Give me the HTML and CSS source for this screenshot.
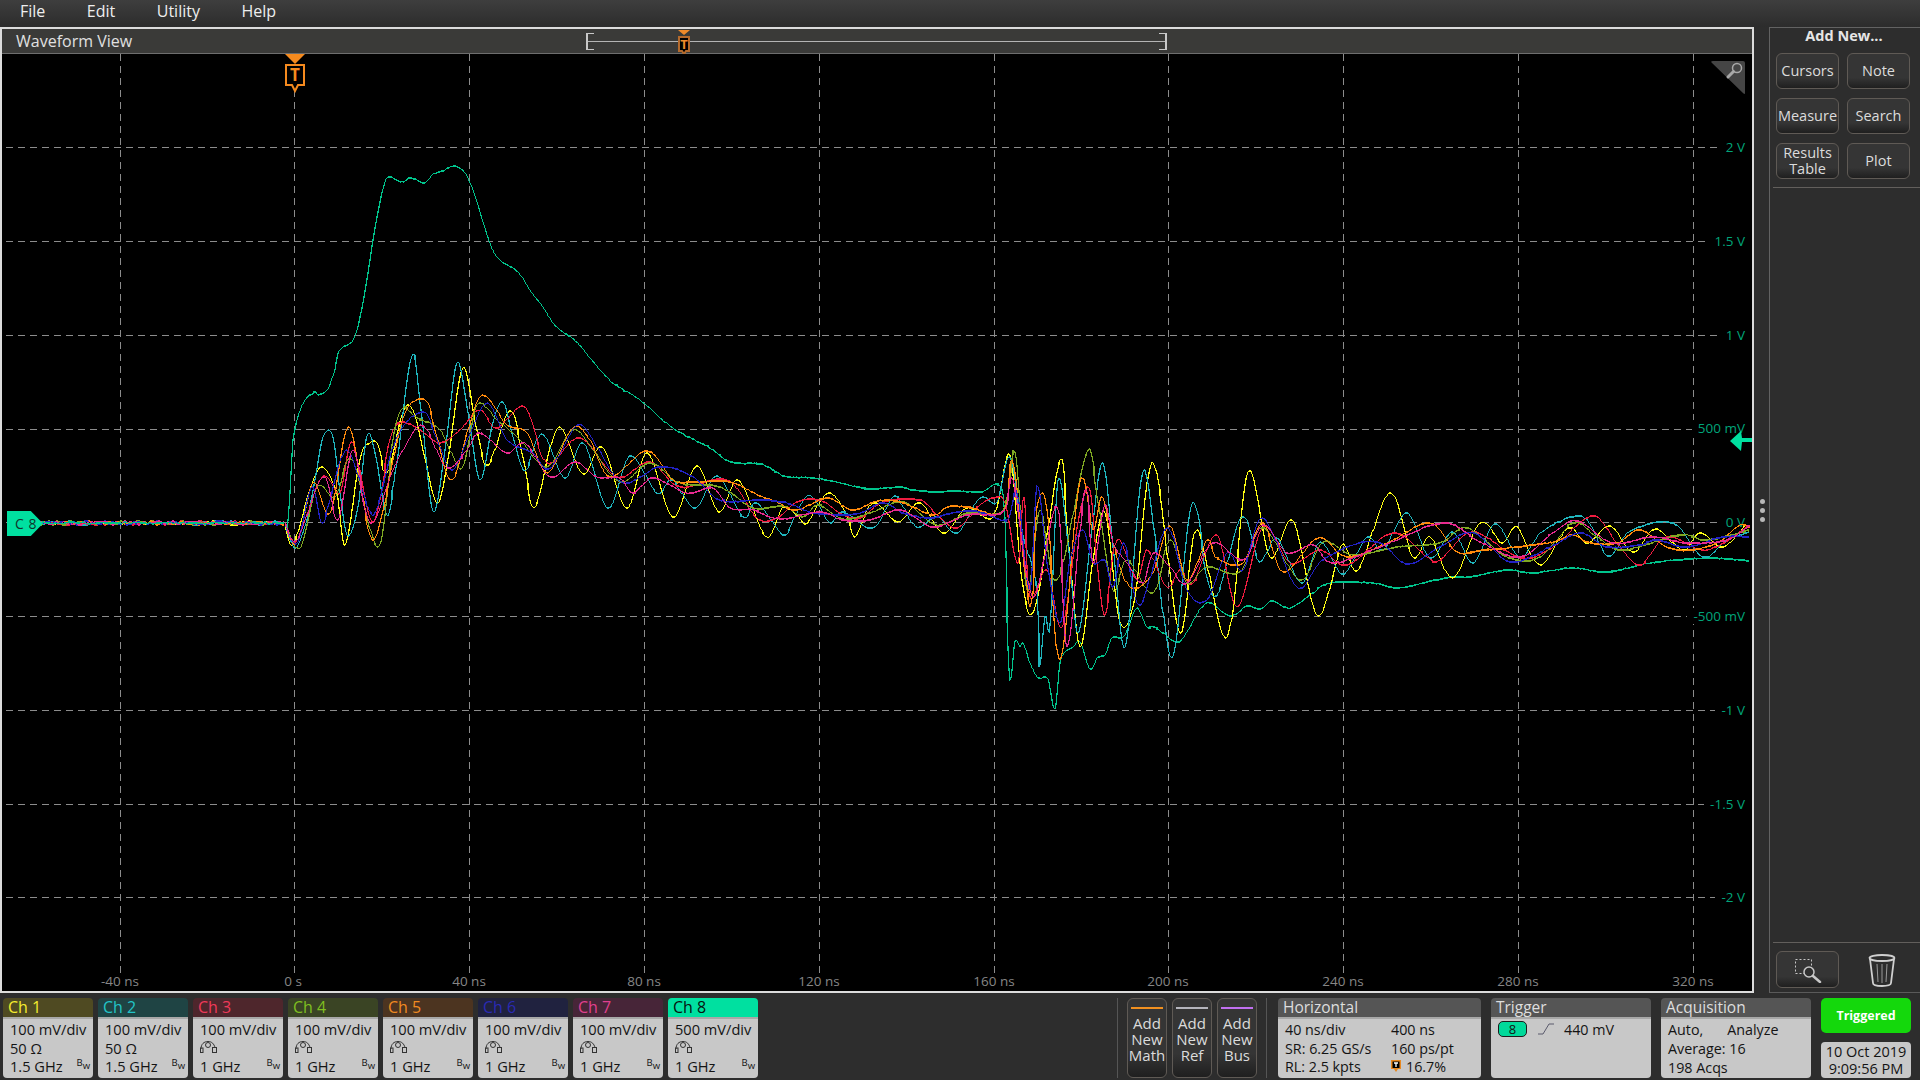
FILE: index.html
```html
<!DOCTYPE html>
<html>
<head>
  <meta charset="utf-8">
  <title>Waveform View</title>
  <link rel="stylesheet" href="styles.css">
</head>
<body>

<div class="menubar">
  <span class="menu-item">File</span>
  <span class="menu-item">Edit</span>
  <span class="menu-item">Utility</span>
  <span class="menu-item">Help</span>
</div>

<div class="main">
  <div class="view">
    <div class="view-title">
      <div class="view-name">Waveform View</div>
      <div class="overview">
        <svg class="overview-mark" width="24" height="24" viewBox="0 0 24 24">
          <polygon class="mark-dim" points="6,0 18,0 12,5"/>
          <path class="mark-box" d="M7 7h10v14h-3l-2 3-2-3h-3z"/>
          <text class="mark-t" x="12" y="18.500">T</text>
        </svg>
      </div>
    </div>
    <div class="plot">
      <svg class="grid" viewBox="2 54 1750 937">
        <g class="grid-v">
          <line x1="120.500" y1="54" x2="120.500" y2="973"/>
          <line x1="294.500" y1="54" x2="294.500" y2="973"/>
          <line x1="469.500" y1="54" x2="469.500" y2="973"/>
          <line x1="644.500" y1="54" x2="644.500" y2="973"/>
          <line x1="819.500" y1="54" x2="819.500" y2="973"/>
          <line x1="994.500" y1="54" x2="994.500" y2="973"/>
          <line x1="1168.500" y1="54" x2="1168.500" y2="973"/>
          <line x1="1343.500" y1="54" x2="1343.500" y2="973"/>
          <line x1="1518.500" y1="54" x2="1518.500" y2="973"/>
          <line x1="1693.500" y1="54" x2="1693.500" y2="973"/>
        </g>
        <g class="grid-h">
          <line x1="6" y1="147.500" x2="1742" y2="147.500"/>
          <line x1="6" y1="241.500" x2="1742" y2="241.500"/>
          <line x1="6" y1="335.500" x2="1742" y2="335.500"/>
          <line x1="6" y1="429.500" x2="1742" y2="429.500"/>
          <line x1="6" y1="522.500" x2="1742" y2="522.500"/>
          <line x1="6" y1="616.500" x2="1742" y2="616.500"/>
          <line x1="6" y1="710.500" x2="1742" y2="710.500"/>
          <line x1="6" y1="804.500" x2="1742" y2="804.500"/>
          <line x1="6" y1="897.500" x2="1742" y2="897.500"/>
        </g>
      </svg>

      <span class="volt" style="top:93px">2 V</span>
      <span class="volt" style="top:187px">1.5 V</span>
      <span class="volt" style="top:281px">1 V</span>
      <span class="volt" style="top:374px">500 mV</span>
      <span class="volt" style="top:468px">0 V</span>
      <span class="volt" style="top:562px">-500 mV</span>
      <span class="volt" style="top:656px">-1 V</span>
      <span class="volt" style="top:750px">-1.5 V</span>
      <span class="volt" style="top:843px">-2 V</span>

      <span class="time" style="left:118px">-40 ns</span>
      <span class="time" style="left:291px">0 s</span>
      <span class="time" style="left:467px">40 ns</span>
      <span class="time" style="left:642px">80 ns</span>
      <span class="time" style="left:817px">120 ns</span>
      <span class="time" style="left:992px">160 ns</span>
      <span class="time" style="left:1166px">200 ns</span>
      <span class="time" style="left:1341px">240 ns</span>
      <span class="time" style="left:1516px">280 ns</span>
      <span class="time" style="left:1691px">320 ns</span>

      <svg id="waves" class="waves" viewBox="2 54 1750 937"></svg>

      <svg class="trig-mark" width="24" height="40" viewBox="0 0 24 40">
        <polygon class="mark-solid" points="2,0 22,0 12,10"/>
        <path class="mark-bright" d="M3 11h18v20h-6l-3 6-3-6h-6z"/>
        <text class="mark-big-t" x="12" y="27">T</text>
      </svg>

      <svg class="zoom-corner" width="36" height="36" viewBox="0 0 36 36">
        <path class="corner-bg" d="M3 1h30q2 0 2 2v30q0 2-2 0L2 3q-2-2 1-2z"/>
        <circle class="corner-glass" cx="27" cy="8" r="4.500"/>
        <line class="corner-handle" x1="23.500" y1="11.500" x2="18" y2="17"/>
      </svg>

      <div class="c8-tag">C 8</div>
      <svg class="level-arrow" width="22" height="20" viewBox="0 0 22 20">
        <polygon class="arrow-fill" points="0,10 11,0 12,7 22,7 22,11 12,11 11,20"/>
      </svg>
    </div>
  </div>

  <div class="gutter">
    <span class="dot"></span>
    <span class="dot"></span>
    <span class="dot"></span>
  </div>

  <div class="panel">
    <div class="panel-title">Add New...</div>
    <div class="panel-buttons">
      <div class="btn">Cursors</div>
      <div class="btn">Note</div>
      <div class="btn">Measure</div>
      <div class="btn">Search</div>
      <div class="btn">Results<br>Table</div>
      <div class="btn">Plot</div>
    </div>
    <div class="panel-rule"></div>
    <div class="panel-space"></div>
    <div class="panel-rule"></div>
    <div class="panel-tools">
      <div class="btn tool-btn">
        <svg width="28" height="26" viewBox="0 0 28 26">
          <rect class="zoom-dots" x="1.500" y="2.500" width="16" height="14"/>
          <circle class="zoom-lens" cx="15" cy="15" r="5"/>
          <line class="zoom-grip" x1="19" y1="19" x2="26" y2="25"/>
        </svg>
      </div>
      <svg class="trash" width="30" height="34" viewBox="0 0 30 34">
        <ellipse class="trash-line" cx="15" cy="5" rx="12.500" ry="3"/>
        <path class="trash-line" d="M3 6l3 24q0 3 9 3t9-3l3-24"/>
        <path class="trash-thin" d="M10 11l1 18M15 11v19M20 11l-1 18"/>
      </svg>
    </div>
  </div>
</div>

<div class="bottombar">
  <div class="channels">
    <div class="badge">
      <div class="badge-head head-1">Ch 1</div>
      <div class="badge-body"><div>100 mV/div</div><div>50 Ω</div><div class="badge-last"><span>1.5 GHz</span><span class="bw">B<sub>w</sub></span></div></div>
    </div>
    <div class="badge">
      <div class="badge-head head-2">Ch 2</div>
      <div class="badge-body"><div>100 mV/div</div><div>50 Ω</div><div class="badge-last"><span>1.5 GHz</span><span class="bw">B<sub>w</sub></span></div></div>
    </div>
    <div class="badge">
      <div class="badge-head head-3">Ch 3</div>
      <div class="badge-body"><div>100 mV/div</div><div class="probe-row"><svg class="probe" viewBox="0 0 17 12"><use href="#probe-icon"/></svg></div><div class="badge-last"><span>1 GHz</span><span class="bw">B<sub>w</sub></span></div></div>
    </div>
    <div class="badge">
      <div class="badge-head head-4">Ch 4</div>
      <div class="badge-body"><div>100 mV/div</div><div class="probe-row"><svg class="probe" viewBox="0 0 17 12"><use href="#probe-icon"/></svg></div><div class="badge-last"><span>1 GHz</span><span class="bw">B<sub>w</sub></span></div></div>
    </div>
    <div class="badge">
      <div class="badge-head head-5">Ch 5</div>
      <div class="badge-body"><div>100 mV/div</div><div class="probe-row"><svg class="probe" viewBox="0 0 17 12"><use href="#probe-icon"/></svg></div><div class="badge-last"><span>1 GHz</span><span class="bw">B<sub>w</sub></span></div></div>
    </div>
    <div class="badge">
      <div class="badge-head head-6">Ch 6</div>
      <div class="badge-body"><div>100 mV/div</div><div class="probe-row"><svg class="probe" viewBox="0 0 17 12"><use href="#probe-icon"/></svg></div><div class="badge-last"><span>1 GHz</span><span class="bw">B<sub>w</sub></span></div></div>
    </div>
    <div class="badge">
      <div class="badge-head head-7">Ch 7</div>
      <div class="badge-body"><div>100 mV/div</div><div class="probe-row"><svg class="probe" viewBox="0 0 17 12"><use href="#probe-icon"/></svg></div><div class="badge-last"><span>1 GHz</span><span class="bw">B<sub>w</sub></span></div></div>
    </div>
    <div class="badge">
      <div class="badge-head head-8">Ch 8</div>
      <div class="badge-body"><div>500 mV/div</div><div class="probe-row"><svg class="probe" viewBox="0 0 17 12"><use href="#probe-icon"/></svg></div><div class="badge-last"><span>1 GHz</span><span class="bw">B<sub>w</sub></span></div></div>
    </div>
  </div>

  <div class="add-group">
    <div class="add-btn"><span class="add-line line-math"></span>Add<br>New<br>Math</div>
    <div class="add-btn"><span class="add-line line-ref"></span>Add<br>New<br>Ref</div>
    <div class="add-btn"><span class="add-line line-bus"></span>Add<br>New<br>Bus</div>
  </div>

  <div class="info info-horizontal">
    <div class="info-head">Horizontal</div>
    <div class="info-body horizontal-grid">
      <div>40 ns/div</div><div>400 ns</div>
      <div>SR: 6.25 GS/s</div><div>160 ps/pt</div>
      <div>RL: 2.5 kpts</div>
      <div class="pos-row">
        <svg width="10" height="12" viewBox="0 0 10 12">
          <path class="pos-icon" d="M0 0h10v9h-3l-2 3-2-3h-3z"/>
          <rect class="pos-inner" x="1.500" y="1.500" width="7" height="6.500"/>
          <path class="pos-t" d="M3 3h4M5 3v4"/>
        </svg>
        <span>16.7%</span>
      </div>
    </div>
  </div>

  <div class="info info-trigger">
    <div class="info-head">Trigger</div>
    <div class="info-body trigger-row">
      <span class="trig-pill">8</span>
      <svg class="slope" width="16" height="12" viewBox="0 0 16 12">
        <path class="slope-line" d="M0 11h5L11 1h5"/>
      </svg>
      <span>440 mV</span>
    </div>
  </div>

  <div class="info info-acq">
    <div class="info-head">Acquisition</div>
    <div class="info-body">
      <div class="acq-top"><span>Auto,</span><span>Analyze</span></div>
      <div>Average: 16</div>
      <div>198 Acqs</div>
    </div>
  </div>

  <div class="status">
    <div class="triggered">Triggered</div>
    <div class="clock">10 Oct 2019<br>9:09:56 PM</div>
  </div>
</div>

<svg class="defs" width="0" height="0">
  <symbol id="probe-icon" viewBox="0 0 17 12" width="17" height="12">
    <path class="probe-line" d="M1 8C1 3 4 .5 8 .5s6 2.500 7 6"/>
    <circle class="probe-line" cx="8" cy="4" r="2.500"/>
    <rect class="probe-line" x="0.500" y="7" width="2.500" height="4.500"/>
    <rect class="probe-line" x="12.500" y="6.500" width="4" height="5"/>
  </symbol>
</svg>

<script src="script.js"></script>
</body>
</html>
```

FILE: styles.css
```css
* {
  box-sizing: border-box;
}

html, body {
  margin: 0;
  padding: 0;
}

body {
  width: 1920px;
  height: 1080px;
  overflow: hidden;
  display: flex;
  flex-direction: column;
  background-color: #2d2d2d;
  color: #e4e4e4;
  font-family: "Open Sans", "Noto Sans", sans-serif;
  font-size: 15px;
}

/* menu */
.menubar {
  height: 27px;
  flex: none;
  display: flex;
  align-items: center;
  gap: 41.500px;
  padding: 0 0 5px 20px;
  background: linear-gradient(#3e3e3e, #2c2c2c);
  font-size: 16px;
  color: #eeeeee;
}

/* main row */
.main {
  height: 966px;
  flex: none;
  display: flex;
}

.view {
  width: 1754px;
  flex: none;
  display: flex;
  flex-direction: column;
  border: 2px solid #dcdcdc;
}

.view-title {
  height: 25px;
  flex: none;
  display: flex;
  align-items: center;
  background-color: #3a3a38;
  border-bottom: 1px solid #6e6e6e;
}

.view-name {
  width: 584px;
  padding-left: 14px;
  font-size: 16px;
  color: #e0e0e0;
}

.overview {
  position: relative;
  width: 581px;
  height: 17px;
  border-left: 2px solid #c8c8c8;
  border-right: 2px solid #c8c8c8;
  background: linear-gradient(#b4b4b4, #b4b4b4) left 8px / 100% 1px no-repeat,
    linear-gradient(#c8c8c8, #c8c8c8) left top / 6px 1px no-repeat,
    linear-gradient(#c8c8c8, #c8c8c8) left bottom / 6px 1px no-repeat,
    linear-gradient(#c8c8c8, #c8c8c8) right top / 6px 1px no-repeat,
    linear-gradient(#c8c8c8, #c8c8c8) right bottom / 6px 1px no-repeat;
}

.overview-mark {
  position: absolute;
  left: 84px;
  top: -3px;
}

.mark-dim { fill: #ef8a2a; }
.mark-box { fill: #000000; stroke: #b56a2c; stroke-width: 2; }
.mark-t {
  fill: #ef8a2a;
  font-size: 13px;
  font-weight: 700;
  text-anchor: middle;
}

.plot {
  position: relative;
  flex: 1;
  background-color: #000000;
  overflow: hidden;
}

.grid, .waves {
  position: absolute;
  left: 0;
  top: 0;
  width: 1750px;
  height: 937px;
}

.grid-v line, .grid-h line {
  stroke: #8c8c8c;
  stroke-width: 1;
  stroke-dasharray: 7 5;
  shape-rendering: crispEdges;
}

.wave {
  fill: none;
  stroke-width: 1.200;
  stroke-linejoin: miter;
  shape-rendering: crispEdges;
}

.wave-1 { stroke: #ffff14; }
.wave-2 { stroke: #1fb5bd; }
.wave-3 { stroke: #f01c40; }
.wave-4 { stroke: #7fa822; }
.wave-5 { stroke: #ff8a0c; }
.wave-6 { stroke: #2222c4; }
.wave-7 { stroke: #e82a90; }
.wave-8 { stroke: #00c48c; }

.volt {
  position: absolute;
  right: 7px;
  padding-left: 6px;
  background-color: #000000;
  color: #00a57a;
  font-size: 13.500px;
  line-height: 16px;
  margin-top: -8px;
}

.time {
  position: absolute;
  top: 918px;
  padding: 0 3px;
  color: #868686;
  font-size: 13.500px;
  line-height: 18px;
  transform: translateX(-50%);
}

.trig-mark {
  position: absolute;
  left: 281px;
  top: 0;
}

.mark-solid { fill: #f58a1e; }
.mark-bright { fill: #000000; stroke: #f58a1e; stroke-width: 2; }
.mark-big-t {
  fill: #f58a1e;
  font-size: 17px;
  font-weight: 700;
  text-anchor: middle;
}

.zoom-corner {
  position: absolute;
  left: 1708px;
  top: 6px;
}

.corner-bg { fill: #454545; }
.corner-glass { fill: none; stroke: #a8a8a8; stroke-width: 1.500; }
.corner-handle { stroke: #a8a8a8; stroke-width: 3; stroke-linecap: round; }

.c8-tag {
  position: absolute;
  left: 5px;
  top: 457px;
  width: 36px;
  height: 25px;
  padding-left: 8px;
  background-color: #00e0a0;
  clip-path: polygon(0 0, 66% 0, 100% 50%, 66% 100%, 0 100%);
  color: #10332a;
  font-size: 14px;
  line-height: 25px;
  letter-spacing: 0.500px;
  white-space: nowrap;
}

.level-arrow {
  position: absolute;
  left: 1728px;
  top: 377px;
}

.arrow-fill { fill: #00e0a0; }

/* gutter */
.gutter {
  width: 15px;
  flex: none;
  display: flex;
  flex-direction: column;
  align-items: center;
  gap: 4px;
  padding-top: 472px;
  padding-left: 2px;
}

.dot {
  width: 5px;
  height: 5px;
  border-radius: 50%;
  background-color: #b8b8b8;
}

/* right panel */
.panel {
  width: 151px;
  flex: none;
  display: flex;
  flex-direction: column;
  border-left: 1px solid #626262;
  border-top: 1px solid #626262;
  border-bottom: 1px solid #5a5a5a;
}

.panel-title {
  height: 25px;
  text-align: center;
  padding-right: 2px;
  font-size: 14.500px;
  font-weight: 700;
  line-height: 15px;
  color: #e6e6e6;
}

.panel-buttons {
  display: grid;
  grid-template-columns: 63px 63px;
  grid-auto-rows: 36px;
  gap: 9px 8px;
  padding-left: 6px;
}

.btn {
  display: flex;
  align-items: center;
  justify-content: center;
  text-align: center;
  border: 1px solid #5f5a55;
  border-radius: 6px;
  background: linear-gradient(#353535 70%, #1f1f1f);
  color: #dcdcdc;
  font-size: 14.500px;
  line-height: 16px;
}

.panel-rule {
  height: 1px;
  margin-left: 3px;
  flex: none;
  background-color: #625f5c;
}

.panel-buttons + .panel-rule {
  margin-top: 8px;
}

.panel-space {
  flex: 1;
}

.panel-tools {
  height: 49px;
  flex: none;
  display: flex;
  align-items: flex-start;
  padding: 8px 0 0 6px;
}

.tool-btn {
  width: 63px;
  height: 37px;
}

.zoom-dots { fill: none; stroke: #c8c8c8; stroke-dasharray: 2 2; }
.zoom-lens { fill: #2f2f2f; stroke: #c8c8c8; stroke-width: 1.500; }
.zoom-grip { stroke: #c8c8c8; stroke-width: 2.500; stroke-linecap: round; }

.trash {
  margin-left: 28px;
  margin-top: 2px;
}

.trash-line { fill: none; stroke: #d0d0d0; stroke-width: 1.800; }
.trash-thin { fill: none; stroke: #9a9a9a; stroke-width: 1; }

/* bottom bar */
.bottombar {
  flex: 1;
  display: flex;
  padding: 5px 0 2px 3px;
}

.channels {
  display: flex;
  gap: 5px;
}

.badge {
  width: 90px;
  display: flex;
  flex-direction: column;
}

.badge-head {
  height: 19px;
  padding-left: 5px;
  font-size: 16px;
  line-height: 18px;
  flex: none;
  border-radius: 4px 4px 0 0;
}

.head-1 { background-color: #4f4a22; color: #f4ec2e; }
.head-2 { background-color: #1f4444; color: #22c4c8; }
.head-3 { background-color: #4e262c; color: #ee3a5a; }
.head-4 { background-color: #3a4424; color: #7fbf20; }
.head-5 { background-color: #4c3420; color: #f08a20; }
.head-6 { background-color: #20223f; color: #2a2ab4; }
.head-7 { background-color: #472538; color: #e0408f; }
.head-8 { background-color: #00e0a0; color: #06140f; }

.badge-body {
  flex: 1;
  padding: 1px 3px 0 7px;
  border-top: 2px solid #a8a8a8;
  border-radius: 0 0 4px 4px;
  background-color: #c8c8c8;
  color: #141414;
  font-size: 14.600px;
  line-height: 19px;
}

.badge-last {
  display: flex;
  justify-content: space-between;
  margin-top: -1px;
}

.probe-row {
  height: 19px;
  padding-top: 2px;
}

.probe {
  width: 17px;
  height: 12px;
  display: block;
}

.probe-line {
  fill: none;
  stroke: #333333;
  stroke-width: 1;
}

.bw {
  font-size: 9.500px;
  line-height: 12px;
}

.bw sub {
  font-size: 9.500px;
  vertical-align: -3px;
  line-height: 0;
}

.add-group {
  display: flex;
  gap: 5px;
  height: 80px;
  margin-left: 359px;
  padding: 0 9px;
  width: 150px;
  border-left: 1px solid #555555;
  border-right: 1px solid #555555;
}

.add-btn {
  width: 40px;
  flex: none;
  padding-top: 8px;
  text-align: center;
  border: 1px solid #5f5a55;
  border-radius: 6px;
  background: linear-gradient(#353535 70%, #1f1f1f);
  color: #dcdcdc;
  font-size: 15px;
  line-height: 16px;
  white-space: nowrap;
}

.add-line {
  display: block;
  height: 2px;
  margin: 0 3px 6px;
}

.line-math { background-color: #f09020; }
.line-ref { background-color: #b4b4bc; }
.line-bus { background-color: #c070f0; }

.info {
  height: 80px;
  display: flex;
  flex-direction: column;
}

.info-horizontal { width: 203px; margin-left: 11px; }
.info-trigger { width: 160px; margin-left: 10px; }
.info-acq { width: 150px; margin-left: 10px; }

.info-head {
  height: 19px;
  flex: none;
  padding-left: 5px;
  border-radius: 4px 4px 0 0;
  background-color: #555555;
  color: #dedede;
  font-size: 15.500px;
  line-height: 18px;
}

.info-body {
  flex: 1;
  padding: 1px 4px 0 7px;
  border-top: 2px solid #a8a8a8;
  border-radius: 0 0 4px 4px;
  background-color: #c8c8c8;
  color: #141414;
  font-size: 14.300px;
  line-height: 19px;
}

.horizontal-grid {
  display: grid;
  grid-template-columns: 106px 1fr;
  grid-auto-rows: 18.500px;
}

.pos-row {
  display: flex;
  align-items: center;
  gap: 5px;
}

.pos-icon { fill: #e8881e; }
.pos-inner { fill: #000000; }
.pos-t { fill: none; stroke: #ffffff; stroke-width: 1.300; }

.trigger-row {
  display: flex;
  align-items: flex-start;
}

.trig-pill {
  width: 29px;
  height: 16px;
  margin-top: 1px;
  text-align: center;
  border: 1px solid #1c1c1c;
  border-radius: 5px;
  background-color: #00d99a;
  font-size: 13px;
  line-height: 14px;
}

.slope {
  margin: 3px 10px 0 11px;
}

.slope-line {
  fill: none;
  stroke: #5a5a6c;
  stroke-width: 1;
}

.acq-top {
  display: flex;
  gap: 24px;
}

.status {
  width: 90px;
  margin-left: 10px;
  display: flex;
  flex-direction: column;
}

.triggered {
  height: 35px;
  display: flex;
  align-items: center;
  justify-content: center;
  border-radius: 5px;
  background-color: #14d80c;
  color: #ffffff;
  font-size: 12.500px;
  font-weight: 700;
}

.clock {
  height: 36px;
  margin-top: 9px;
  border-radius: 4px;
  text-align: center;
  background-color: #c8c8c8;
  color: #141414;
  font-size: 14.500px;
  line-height: 17px;
  padding-top: 1px;
  white-space: nowrap;
}

.defs {
  position: absolute;
}
```

FILE: script.js
```js
// control points of each trace, x and y in page pixels, drawn with a spline
var traces = {
  8: [285,523, 288,520, 293,440, 302,405, 315,392, 318,395, 328,389, 335,370, 338,353, 343,347, 352,342, 357,330, 363,303, 368,273, 373,240, 377,217, 382,193, 387,178, 393,178, 398,181, 405,181, 409,178, 417,180, 423,183, 428,180, 433,174, 443,171, 453,166, 460,168, 465,173, 470,183, 477,202, 483,222, 490,243, 495,254, 502,262, 513,268, 520,275, 532,293, 543,307, 553,323, 563,332, 577,342, 590,358, 603,373, 613,383, 622,389, 640,400, 673,428, 710,448, 730,462, 760,464, 777,472, 787,477, 813,478, 837,482, 857,487, 873,489, 900,487, 913,490, 937,492, 953,491, 980,492, 1003,494, 1007,620, 1010,680, 1015,641, 1020,647, 1023,643, 1030,663, 1038,678, 1048,679, 1055,709, 1060,663, 1065,652, 1073,647, 1080,642, 1090,669, 1098,657, 1105,655, 1112,638, 1122,638, 1127,630, 1137,608, 1147,627, 1155,627, 1177,642, 1188,630, 1207,603, 1230,616, 1247,606, 1260,609, 1272,601, 1290,608, 1313,593, 1330,583, 1373,583, 1397,588, 1427,582, 1453,577, 1470,577, 1507,570, 1533,573, 1573,568, 1607,572, 1650,563, 1707,558, 1750,561],
  1: [285,523, 293,545, 310,490, 322,467, 337,493, 345,545, 360,460, 370,443, 378,445, 387,473, 403,413, 413,410, 423,450, 437,503, 447,463, 463,368, 477,430, 488,465, 510,411, 523,457, 535,507, 558,428, 583,474, 602,447, 627,508, 647,453, 673,517, 697,466, 719,512, 738,480, 765,536, 777,520, 783,507, 797,515, 807,523, 828,493, 847,515, 855,537, 873,503, 898,522, 920,503, 943,533, 967,508, 993,517, 1010,455, 1022,580, 1035,607, 1060,460, 1068,540, 1080,647, 1093,560, 1105,513, 1120,622, 1135,597, 1148,478, 1158,480, 1180,633, 1197,530, 1227,637, 1248,472, 1270,557, 1293,521, 1318,616, 1342,545, 1358,570, 1390,493, 1413,557, 1430,537, 1453,578, 1480,523, 1502,543, 1517,527, 1540,565, 1568,528, 1587,543, 1610,526, 1633,552, 1655,529, 1683,550, 1700,533, 1723,547, 1747,523],
  2: [285,523, 295,548, 307,520, 315,480, 323,437, 333,437, 342,507, 348,536, 358,507, 367,436, 375,453, 387,515, 395,473, 412,356, 420,403, 433,511, 445,450, 457,363, 467,407, 480,480, 493,423, 503,402, 513,437, 525,471, 542,434, 565,478, 583,443, 608,508, 630,456, 657,493, 672,480, 695,508, 717,476, 743,517, 757,503, 783,535, 793,520, 807,496, 817,503, 830,523, 843,512, 873,528, 893,497, 903,507, 917,527, 937,517, 957,533, 980,498, 997,502, 1010,457, 1022,530, 1037,590, 1039,667, 1045,617, 1050,625, 1058,480, 1068,543, 1078,633, 1093,523, 1103,463, 1113,547, 1125,647, 1142,476, 1153,523, 1172,658, 1192,504, 1207,577, 1218,593, 1242,517, 1258,560, 1267,552, 1278,539, 1302,583, 1320,542, 1343,574, 1367,537, 1383,550, 1407,513, 1430,558, 1453,532, 1473,563, 1495,524, 1520,557, 1543,531, 1583,517, 1608,556, 1630,531, 1673,523, 1703,557, 1727,540, 1750,532],
  3: [285,523, 297,540, 322,477, 340,493, 352,442, 373,522, 390,440, 402,422, 423,432, 440,443, 460,430, 480,410, 497,428, 525,407, 547,463, 580,438, 617,477, 650,462, 680,487, 727,480, 757,518, 777,518, 797,502, 820,500, 840,513, 860,518, 883,502, 920,500, 937,515, 957,528, 980,505, 993,498, 1005,503, 1018,563, 1024,497, 1030,597, 1047,570, 1062,627, 1080,513, 1090,490, 1097,563, 1105,615, 1117,540, 1137,580, 1147,550, 1167,587, 1180,570, 1193,583, 1217,535, 1237,607, 1263,527, 1290,563, 1320,550, 1347,565, 1393,533, 1427,557, 1440,560, 1473,532, 1520,558, 1553,547, 1592,516, 1617,543, 1640,565, 1667,537, 1707,550, 1750,525],
  4: [285,523, 300,548, 317,487, 335,497, 352,460, 378,547, 393,440, 403,408, 417,418, 440,430, 462,468, 477,405, 497,420, 520,440, 547,467, 573,430, 593,450, 620,482, 650,463, 680,483, 720,487, 753,508, 783,506, 803,517, 818,505, 843,519, 870,513, 903,502, 937,525, 967,513, 1003,510, 1015,452, 1027,590, 1040,510, 1057,580, 1087,452, 1097,497, 1113,590, 1127,560, 1153,593, 1170,540, 1187,583, 1207,567, 1240,572, 1263,528, 1300,580, 1323,542, 1353,555, 1397,547, 1440,543, 1467,528, 1507,557, 1540,557, 1573,523, 1597,537, 1623,550, 1680,535, 1707,540, 1750,530],
  5: [285,523, 297,543, 313,483, 330,513, 349,427, 370,535, 383,510, 403,418, 425,400, 437,437, 453,479, 480,397, 507,425, 527,433, 547,473, 573,428, 590,440, 610,477, 647,451, 673,480, 693,482, 730,482, 760,496, 777,502, 797,510, 827,498, 853,510, 877,501, 900,502, 933,515, 947,507, 967,507, 1003,512, 1013,463, 1030,607, 1037,507, 1047,510, 1060,660, 1080,482, 1093,530, 1102,497, 1113,543, 1130,587, 1153,573, 1170,526, 1187,580, 1207,540, 1217,558, 1243,563, 1263,523, 1283,572, 1318,538, 1347,557, 1387,543, 1430,523, 1457,552, 1483,550, 1517,547, 1553,542, 1573,535, 1590,543, 1617,543, 1640,530, 1667,547, 1690,550, 1717,543, 1740,525, 1750,528],
  6: [285,523, 297,543, 312,487, 322,523, 330,500, 347,450, 368,507, 377,508, 397,437, 423,412, 437,440, 452,470, 467,440, 487,403, 507,440, 533,453, 550,468, 578,425, 597,447, 623,483, 660,467, 693,477, 720,500, 760,500, 787,503, 810,512, 837,515, 860,513, 883,503, 903,513, 930,518, 957,512, 980,512, 1007,520, 1017,493, 1030,590, 1037,486, 1047,563, 1060,623, 1070,560, 1083,530, 1093,563, 1105,560, 1113,587, 1124,543, 1140,605, 1167,528, 1187,590, 1207,600, 1227,553, 1243,570, 1263,518, 1297,587, 1320,562, 1353,545, 1380,543, 1407,564, 1440,547, 1473,533, 1510,562, 1550,547, 1580,533, 1607,547, 1640,545, 1657,540, 1687,547, 1723,537, 1750,537],
  7: [285,523, 297,540, 323,477, 338,520, 353,450, 370,523, 393,470, 415,430, 427,430, 447,468, 467,450, 480,433, 507,453, 525,443, 550,477, 575,462, 597,477, 620,478, 633,493, 653,478, 687,493, 713,488, 730,508, 753,510, 780,519, 820,512, 843,520, 870,520, 900,510, 933,527, 967,515, 1003,512, 1013,480, 1033,597, 1057,507, 1067,647, 1085,490, 1093,563, 1105,505, 1113,543, 1127,563, 1143,583, 1153,553, 1170,567, 1187,583, 1213,543, 1243,560, 1263,525, 1287,553, 1313,545, 1333,563, 1380,547, 1443,523, 1480,542, 1520,557, 1553,533, 1577,521, 1613,543, 1653,537, 1687,543, 1727,540, 1750,525]
};

var seed = 7;
function noise() {
  seed = (seed * 16807) % 2147483647;
  return seed / 2147483647 - 0.5;
}

function sample(data) {
  var pts = [];
  var n = data.length / 2;
  for (var i = 0; i < n - 1; i++) {
    var a = Math.max(i - 1, 0), b = i, c = i + 1, d = Math.min(i + 2, n - 1);
    var x0 = data[a * 2], y0 = data[a * 2 + 1];
    var x1 = data[b * 2], y1 = data[b * 2 + 1];
    var x2 = data[c * 2], y2 = data[c * 2 + 1];
    var x3 = data[d * 2], y3 = data[d * 2 + 1];
    var steps = Math.max(2, Math.round(x2 - x1));
    for (var s = 0; s < steps; s++) {
      var t = s / steps, t2 = t * t, t3 = t2 * t;
      var x = 0.5 * (2 * x1 + (x2 - x0) * t + (2 * x0 - 5 * x1 + 4 * x2 - x3) * t2 + (3 * x1 - x0 - 3 * x2 + x3) * t3);
      var y = 0.5 * (2 * y1 + (y2 - y0) * t + (2 * y0 - 5 * y1 + 4 * y2 - y3) * t2 + (3 * y1 - y0 - 3 * y2 + y3) * t3);
      y += noise() * 0.9;
      pts.push(Math.round(x) + "," + Math.round(y));
    }
  }
  return pts.join(" ");
}

// the noisy flat part before the trigger, the widest noise goes underneath
function flat(amount) {
  var pts = [];
  for (var x = 40; x <= 285; x += 2) {
    pts.push(x + "," + Math.round(523 + noise() * amount));
  }
  return pts.join(" ");
}

var svg = document.getElementById("waves");

function addLine(ch, points) {
  var line = document.createElementNS("http://www.w3.org/2000/svg", "polyline");
  line.setAttribute("class", "wave wave-" + ch);
  line.setAttribute("points", points);
  svg.appendChild(line);
}

[1, 2, 3, 4, 5, 6, 7].forEach(function (ch) {
  addLine(ch, flat(5));
});
addLine(8, flat(1.5));

[8, 1, 2, 3, 4, 5, 6, 7].forEach(function (ch) {
  addLine(ch, sample(traces[ch]));
});
```
